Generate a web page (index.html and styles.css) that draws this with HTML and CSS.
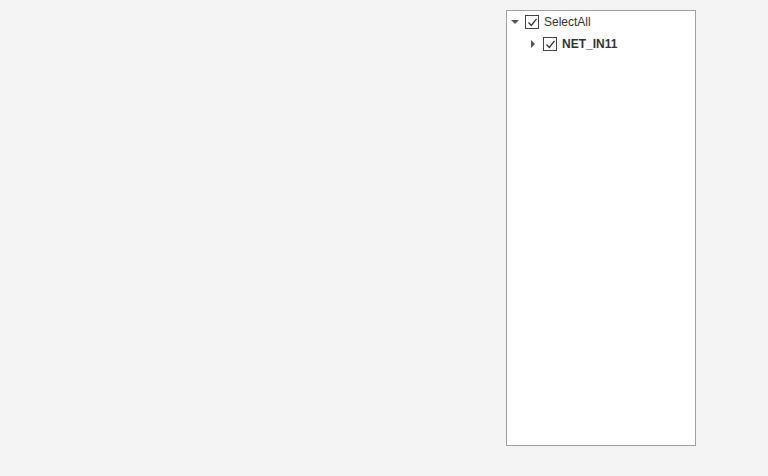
FILE: index.html
```html
<!DOCTYPE html>
<html lang="en">
<head>
    <meta charset="UTF-8">
    <title>Tree</title>
    <link rel="stylesheet" href="styles.css">
</head>
<body>
    <div class="tree">
        <div class="node">
            <span class="arrow down"></span>
            <span class="check"><svg width="11" height="11" viewBox="0 0 11 11"><path d="M1.5 5.5 L4.3 8.5 L9.5 1.8" fill="none" stroke="#333" stroke-width="1.3"/></svg></span>
            <span class="label">SelectAll</span>
        </div>
        <div class="node child">
            <span class="arrow right"></span>
            <span class="check"><svg width="11" height="11" viewBox="0 0 11 11"><path d="M1.5 5.5 L4.3 8.5 L9.5 1.8" fill="none" stroke="#333" stroke-width="1.3"/></svg></span>
            <span class="label bold">NET_IN11</span>
        </div>
    </div>
</body>
</html>
```
FILE: styles.css
```css
* {
    box-sizing: border-box;
}
body {
    margin: 0;
    background-color: #f4f4f4;
    font-family: Arial, "Liberation Sans", sans-serif;
    font-size: 12px;
    color: #333333;
}
.tree {
    margin: 10px 0 0 506px;
    width: 190px;
    height: 436px;
    background-color: white;
    border: 1px solid #a0a0a0;
    padding-top: 0;
}
.node {
    display: flex;
    align-items: center;
    height: 22px;
    padding-left: 1px;
}
.child {
    padding-left: 19px;
}
.arrow {
    width: 14px;
    height: 14px;
    display: flex;
    align-items: center;
    justify-content: center;
    margin-right: 3px;
}
.arrow.down::before {
    content: "";
    border-left: 4px solid transparent;
    border-right: 4px solid transparent;
    border-top: 4px solid #555;
}
.arrow.right::before {
    content: "";
    border-top: 4px solid transparent;
    border-bottom: 4px solid transparent;
    border-left: 4px solid #555;
}
.check {
    width: 14px;
    height: 14px;
    border: 1px solid #444;
    background: white;
    display: flex;
    align-items: center;
    justify-content: center;
    margin-right: 5px;
}
.bold {
    font-weight: bold;
}
```
